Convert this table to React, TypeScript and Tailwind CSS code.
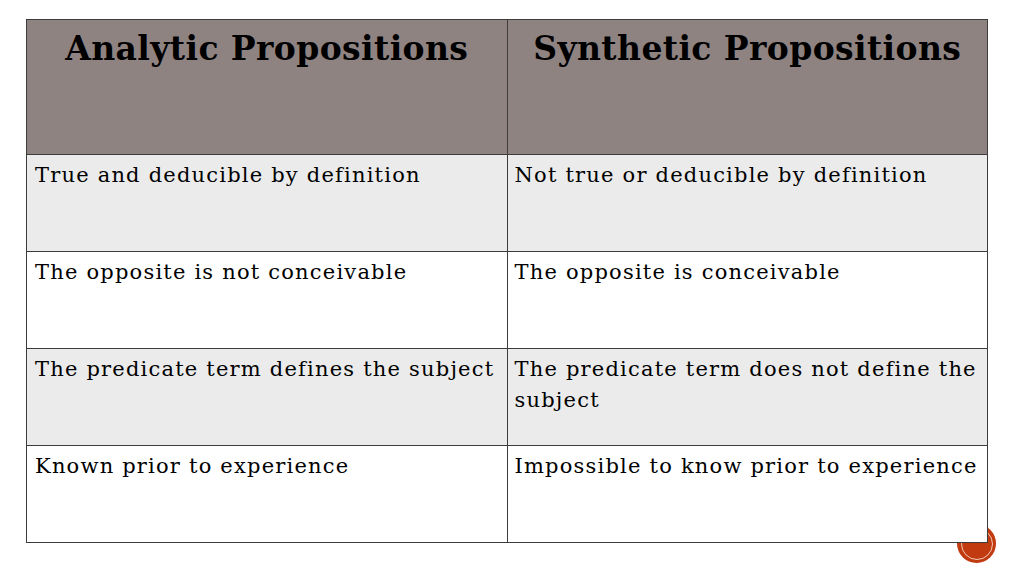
const rows: [string, string][] = [
  ["True and deducible by definition", "Not true or deducible by definition"],
  ["The opposite is not conceivable", "The opposite is conceivable"],
  ["The predicate term defines the subject", "The predicate term does not define the subject"],
  ["Known prior to experience", "Impossible to know prior to experience"],
];

export default function App() {
  return (
    <div
      className="relative w-[1024px] h-[576px] bg-white overflow-hidden"
      style={{ fontFamily: '"DejaVu Serif", "Liberation Serif", serif' }}
    >
      {/* slide number badge, sits under the table */}
      <div className="absolute left-[957px] top-[524px] w-[39px] h-[39px] rounded-full bg-[#c13a10] flex items-center justify-center">
        <div className="w-[32px] h-[32px] rounded-full border border-[#f3c9b6]" />
      </div>

      <div className="relative pt-[19px] pl-[26px]">
        <table className="w-[962px] table-fixed border-collapse text-black">
          <thead>
            <tr className="h-[135px] bg-[#8f8382]">
              <th className="w-1/2 border border-[#3c3c3c] align-top pt-[12px] text-[33px] font-bold leading-none tracking-[0.4px]">
                Analytic Propositions
              </th>
              <th className="w-1/2 border border-[#3c3c3c] align-top pt-[12px] text-[33px] font-bold leading-none tracking-[0.4px]">
                Synthetic Propositions
              </th>
            </tr>
          </thead>
          <tbody>
            {rows.map(([a, b], i) => (
              <tr key={i} className={`h-[97px] ${i % 2 === 0 ? "bg-[#ebebeb]" : "bg-white"}`}>
                <td className="border border-[#3c3c3c] align-top pl-[8px] pr-[4px] pt-[5px] text-[21px] leading-[31px] tracking-[1.2px]">
                  {a}
                </td>
                <td className="border border-[#3c3c3c] align-top pl-[7px] pr-[4px] pt-[5px] text-[21px] leading-[31px] tracking-[1.2px]">
                  {b}
                </td>
              </tr>
            ))}
          </tbody>
        </table>
      </div>
    </div>
  );
}
